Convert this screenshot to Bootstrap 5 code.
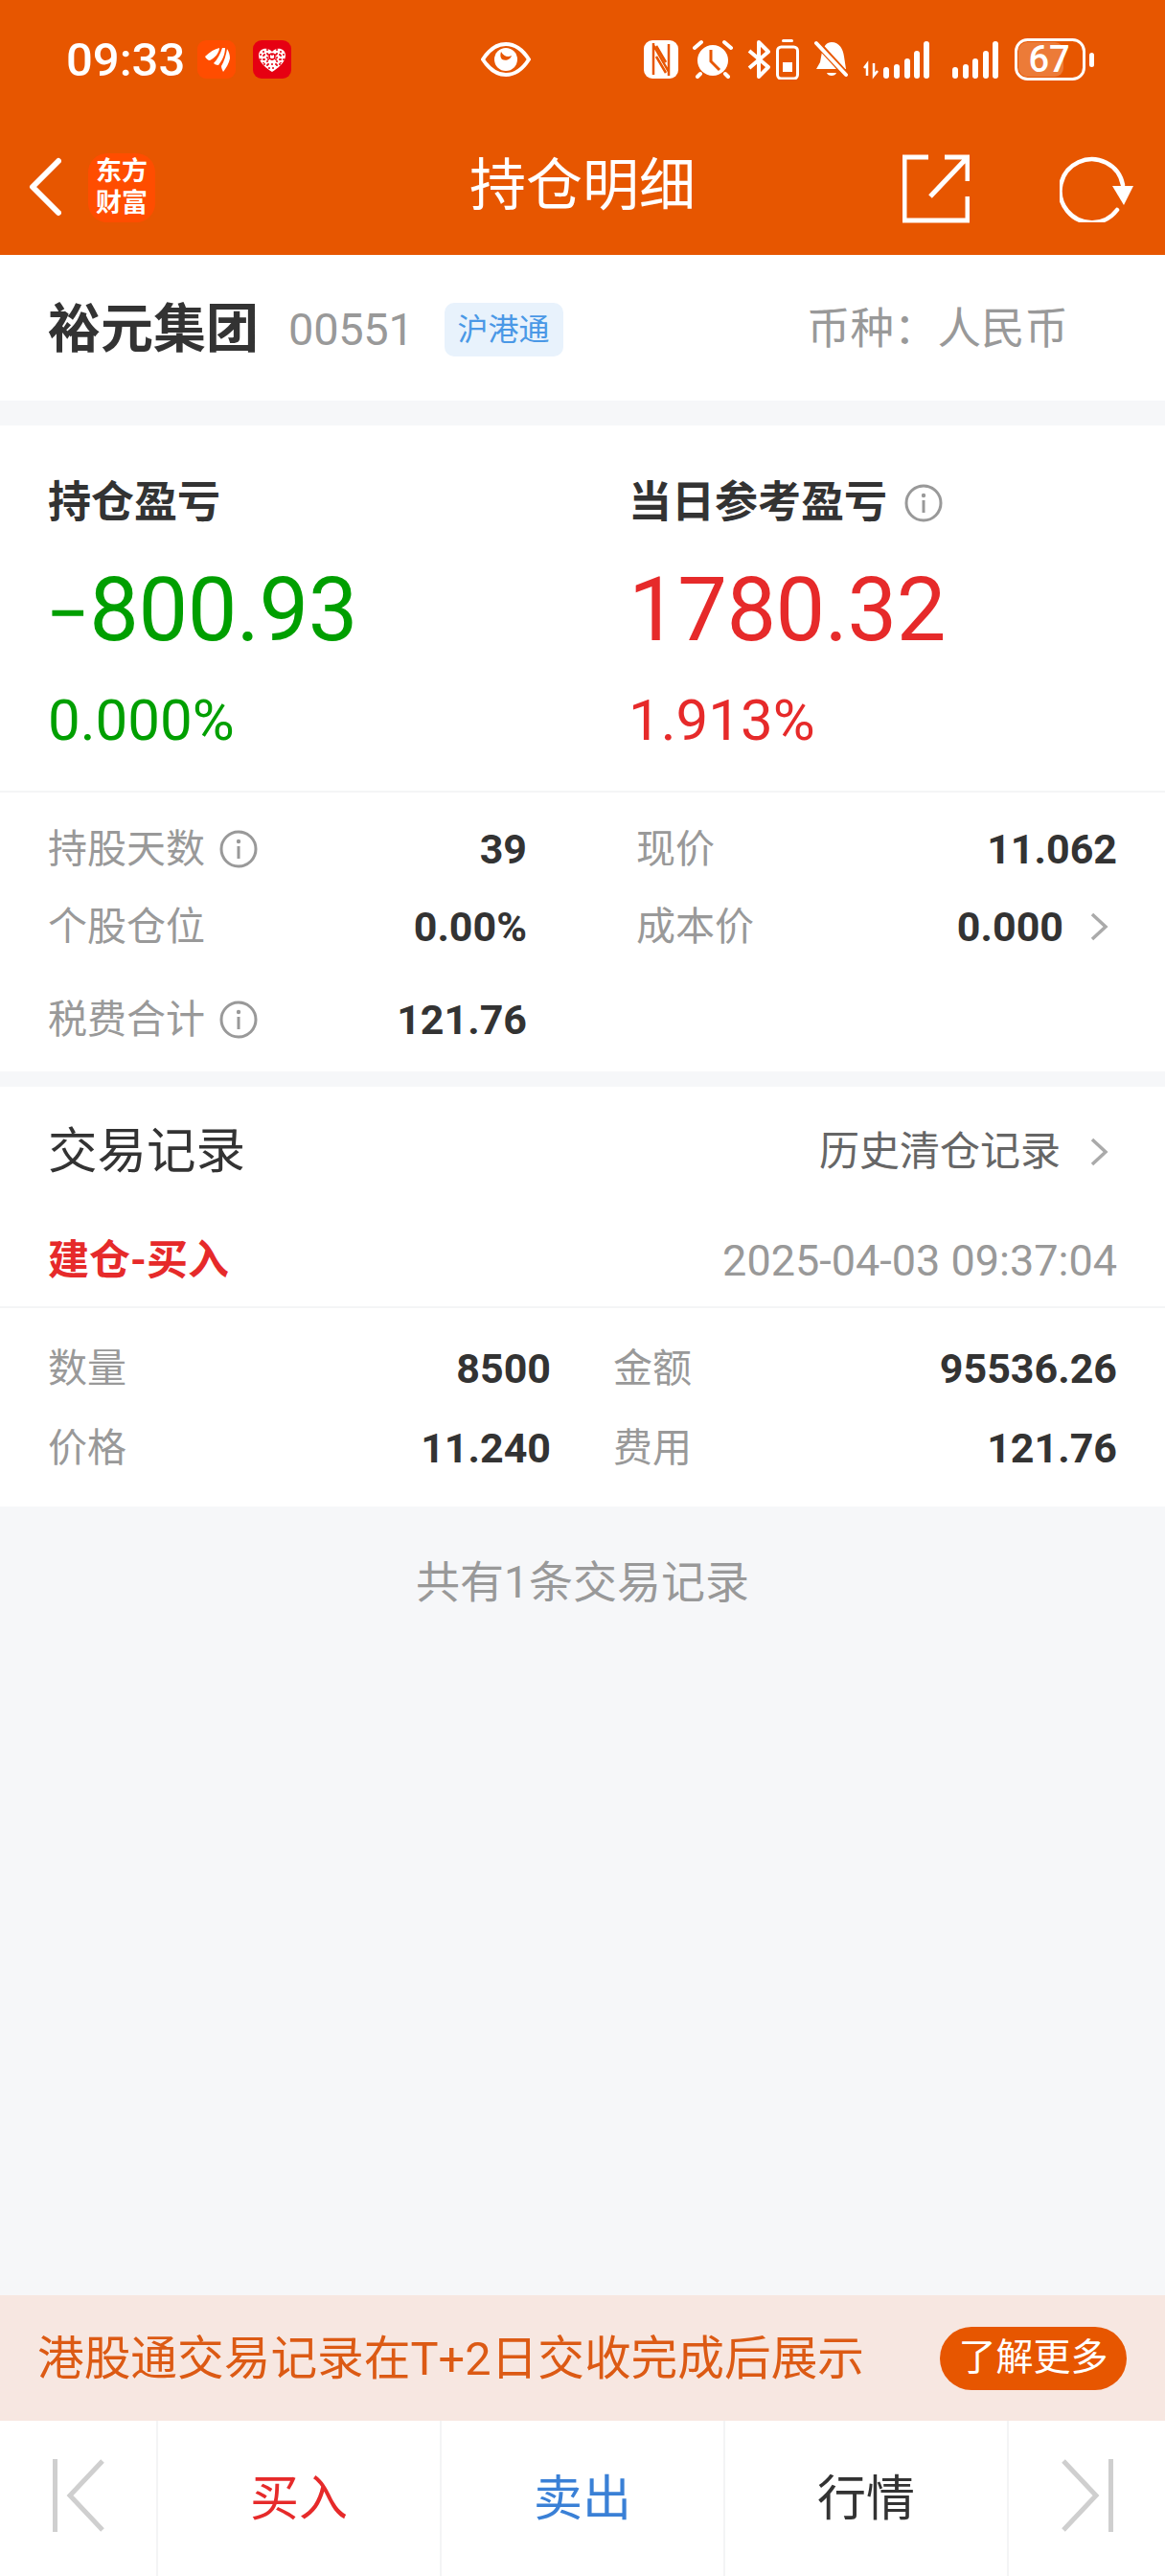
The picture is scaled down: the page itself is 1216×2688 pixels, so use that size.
<!DOCTYPE html>
<html lang="zh-CN">
<head>
  <meta charset="UTF-8">
  <meta name="viewport" content="width=device-width, initial-scale=1.0">
  <title>持仓明细</title>
  <link href="https://cdn.jsdelivr.net/npm/bootstrap@5.3.0/dist/css/bootstrap.min.css" rel="stylesheet">
  <style>
    body { background: #f6f7f9; font-family: Roboto, "Noto Sans CJK SC", sans-serif; color: #333; width: 1216px; height: 2688px; overflow: hidden; }
    .page { height: 2688px; }
    .hd { background: #e75600; height: 266px; color: #fff; }
    .status-row { height: 124px; padding-left: 69px; }
    .clock { font-size: 49px; font-weight: 500; line-height: 1; width: 137px; }
    .nav-row { height: 142px; padding-left: 30px; position: relative; }
    .ef-logo { flex: none; width: 70px; height: 72px; background-color: #ff4d00; border-radius: 20px; margin-left: 28px; margin-top: 36px; padding-top: 3px; font-size: 27px; line-height: 33px; font-weight: 700; text-align: center; }
    .nav-title { position: absolute; left: 0; right: 0; top: 32px; text-align: center; font-size: 59px; line-height: 76px; pointer-events: none; }
    .sec { background: #fff; padding-left: 50px; padding-right: 50px; }
    .stock-sec { height: 152px; padding-top: 3px; }
    .stock-name { font-size: 55px; font-weight: 700; line-height: 1; }
    .stock-code { font-size: 47px; color: #999; letter-spacing: -.3px; margin-left: 31px; line-height: 1; }
    .tag-blue { background: #e8f2fc; color: #4a98e6; font-size: 32px; line-height: 56px; height: 56px; padding: 0 14px; border-radius: 10px; margin-left: 32px; }
    .currency { font-size: 45.5px; color: #999; margin-left: auto; margin-right: 51px; line-height: 1; }
    .pnl-sec { margin-top: 26px; height: 674px; }
    .pnl-top { height: 383px; margin-left: -50px; margin-right: -50px; padding: 0 50px; border-bottom: 2px solid #f4f5f6; }
    .pnl-title { font-size: 45px; font-weight: 700; line-height: 56px; padding-top: 53px; height: 109px; }
    .pnl-num { font-size: 92px; line-height: 110px; margin-top: 29px; letter-spacing: -.5px; }
    .minus-sign { font-size: 80px; line-height: 0; margin-left: -2px; }
    .pnl-rate { font-size: 60px; line-height: 70px; margin-top: 25px; }
    .up { color: #e62a2a; }
    .down { color: #009f00; }
    .right-col { padding-left: 48px; }
    .kv { font-size: 41px; line-height: 56px; }
    .kv-label { color: #999; }
    .kv-val { font-weight: 700; font-size: 43px; color: #333; margin-left: auto; }
    .kv-left { padding-right: 58px; }
    .kv-right { padding-left: 56px; }
    .metrics { padding-top: 31px; }
    .mrow-a { margin-bottom: 25px; }
    .mrow-c { margin-top: 41px; }
    .info-ic { width: 40px; height: 40px; margin-left: 15px; flex: none; }
    .title-info { margin-left: 18px; margin-top: 8px; }
    .chev-ic { width: 20px; height: 32px; margin-left: 27px; margin-right: 9px; flex: none; }
    .trade-sec { margin-top: 16px; height: 438px; }
    .trade-title { height: 131px; padding-top: 5px; }
    .trade-title .ttl { font-size: 51.5px; line-height: 1; }
    .trade-title .hist { font-size: 42px; color: #666; line-height: 1; margin-left: auto; margin-right: 3px; }
    .trade-head { height: 100px; margin: 0 -50px; padding: 2px 50px 0; border-bottom: 2px solid #f4f5f6; }
    .trade-kind { font-size: 43px; font-weight: 700; color: #e62a2a; line-height: 1; }
    .trade-time { font-size: 45px; color: #999; margin-left: auto; line-height: 1; }
    .trade-grid { padding-top: 35px; }
    .trow { height: 83px; }
    .kv-lt { padding-right: 33px; }
    .kv-rt { padding-left: 32px; }
    .count-note { font-size: 46px; color: #999; text-align: center; line-height: 56px; padding-top: 51px; height: 823px; }
    .hk-banner { background: #f7e7e1; height: 131px; padding: 0 40px 0 39px; }
    .hk-text { font-size: 48.7px; color: #dc5a14; line-height: 1; padding-top: 3px; }
    .more-pill { background: #e75600; color: #fff; font-size: 39px; line-height: 64px; height: 66px; width: 195px; border-radius: 33px; text-align: center; margin-left: auto; }
    .tool-bar { background: #fff; height: 162px; }
    .tool-end { width: 163px; padding-top: 40px; }
    .tool-mid { width: 296px; border-left: 2px solid #f3f4f5; font-size: 51px; padding-top: 2px; }
    .tool-last { border-left: 2px solid #f3f4f5; flex: 1; padding-top: 40px; }
    .sell { color: #3a80d6; }
    .stat-gap-eye { margin-left: 198px; }
    .stat-gap-nfc { margin-left: 118px; }
    .stat-gap-15 { margin-left: 15px; }
    .stat-gap-16 { margin-left: 16px; }
    .stat-gap-18 { margin-left: 18px; }
    .stat-gap-20 { margin-left: 20px; }
    .stat-gap-5 { margin-left: 5px; }
    .back-ic { margin-top: 40px; }
    .share-ic { margin-top: 37px; margin-left: auto; }
    .refresh-ic { margin-top: 36px; margin-left: 94px; margin-right: 32px; }
  </style>
</head>
<body>
  <div class="page d-flex flex-column">
    <header class="hd">
      <div class="status-row d-flex align-items-center">
        <span class="clock">09:33</span>
        <svg width="40" height="40" viewBox="0 0 40 40"><rect width="40" height="40" rx="9" fill="#ff4d00"/><path d="M8 17C13 12 18 9 23 8C23 13 18 19 13 21C11 21 9 19 8 17Z M17 24C21 20 24 14 26 8L29 8C29 15 26 21 22 26C20 26 18 25 17 24Z M25 27C28 22 30 15 31 9C33 12 34 15 34 19C33 24 30 29 27 33C26 31 25 29 25 27Z" fill="#fff"/></svg>
        <svg class="stat-gap-18" width="40" height="40" viewBox="0 0 40 40"><rect width="40" height="40" rx="9" fill="#e60012"/><path d="M20 12C17 7 6 7 6 16C6 23 15 30 20 33C25 30 34 23 34 16C34 7 23 7 20 12Z" fill="#fff"/><g fill="none" stroke="#e60012" stroke-width="1.5"><circle cx="20" cy="17" r="3"/><path d="M11 11V24M15 9V29M25 9V29M29 11V24M7 15H33M7 20H33M11 25H29M16 29H24" stroke-dasharray="2 2"/></g></svg>
        <svg class="stat-gap-eye" width="52" height="38" viewBox="0 0 52 38"><path d="M2 19C9 8 17 3 26 3S43 8 50 19C43 30 35 35 26 35S9 30 2 19Z" fill="none" stroke="#fff" stroke-width="4"/><circle cx="26" cy="19" r="12" fill="#fff"/><path d="M21 11C24 16 28 17 32 15C31 19 26 21 22 19C20 17 20 14 21 11Z" fill="#e75600"/></svg>
        <svg class="stat-gap-nfc" width="36" height="40" viewBox="0 0 36 40"><rect width="36" height="40" rx="9" fill="#fff"/><path d="M10 3V36M26 4V37M10 5L26 33" fill="none" stroke="#e75600" stroke-width="2.5"/><path d="M13 17L23 34M13 6L23 23" stroke="#e75600" stroke-width="2.5" fill="none"/></svg>
        <svg class="stat-gap-15" width="42" height="42" viewBox="0 0 42 42"><circle cx="21" cy="22" r="16" fill="#fff"/><path d="M2 9L9 3M40 9L33 3M8 36L5 39M34 36L37 39" stroke="#fff" stroke-width="4" stroke-linecap="round"/><path d="M19 11V23L28 32" fill="none" stroke="#e75600" stroke-width="3"/></svg>
        <svg class="stat-gap-15" width="25" height="42" viewBox="0 0 25 42"><path d="M2 12L22 29L12 39V3L22 13L2 30" fill="none" stroke="#fff" stroke-width="4" stroke-linejoin="round"/></svg>
        <svg class="stat-gap-5" width="24" height="42" viewBox="0 0 24 42"><rect x="6" y="0" width="12" height="3" rx="1.5" fill="#fff"/><rect x="1.5" y="8" width="21" height="33" rx="4" fill="none" stroke="#fff" stroke-width="3"/><rect x="7" y="24" width="10" height="10" fill="#fff"/></svg>
        <svg class="stat-gap-16" width="36" height="42" viewBox="0 0 36 42"><path d="M18 3C26 3 30 10 31 18L33 31H2L6 24L8 13C10 7 13 3 18 3Z" fill="#fff"/><path d="M13 35H23C22 39 14 39 13 35Z" fill="#fff"/><path d="M1 2L34 38" stroke="#e75600" stroke-width="7"/><path d="M2 4L33 37" stroke="#fff" stroke-width="4" stroke-linecap="round"/></svg>
        <svg class="stat-gap-15" width="72" height="42" viewBox="0 0 72 42"><path d="M4 38V26L1 30" stroke="#fff" stroke-width="2.5" fill="none"/><path d="M11 25V38L15 33" stroke="#fff" stroke-width="2.5" fill="none"/><g fill="#fff"><rect x="21" y="29" width="6" height="12" rx="3"/><rect x="32" y="26" width="6" height="15" rx="3"/><rect x="43" y="20" width="6" height="21" rx="3"/><rect x="53" y="12" width="6" height="29" rx="3"/><rect x="63" y="2" width="6" height="39" rx="3"/></g></svg>
        <svg class="stat-gap-20" width="50" height="42" viewBox="0 0 50 42"><g fill="#fff"><rect x="1" y="29" width="6" height="12" rx="3"/><rect x="12" y="26" width="6" height="15" rx="3"/><rect x="22" y="20" width="6" height="21" rx="3"/><rect x="33" y="12" width="6" height="29" rx="3"/><rect x="43" y="2" width="6" height="39" rx="3"/></g></svg>
        <svg class="stat-gap-16" width="84" height="44" viewBox="0 0 84 44"><rect x="4" y="4" width="47" height="36" rx="9" fill="#fff" opacity=".22"/><rect x="1.5" y="1.5" width="71" height="41" rx="12" fill="none" stroke="#fff" stroke-width="3"/><rect x="78" y="15" width="5" height="15" rx="2.5" fill="#fff"/><text x="36" y="35" text-anchor="middle" fill="#fff" font-size="38" font-weight="500" font-family="Roboto, sans-serif">67</text></svg>
      </div>
      <div class="nav-row d-flex align-items-start">
        <svg class="back-ic" width="34" height="62" viewBox="0 0 34 62"><path d="M31 4L4 31L31 58" fill="none" stroke="#fff" stroke-width="6" stroke-linecap="round" stroke-linejoin="round"/></svg>
        <div class="ef-logo">东方<br>财富</div>
        <div class="nav-title">持仓明细</div>
        <svg class="share-ic" width="70" height="72" viewBox="0 0 70 72"><path d="M27 3H2V69H68V44M44 3H68V28M68 3L29 44" fill="none" stroke="#fff" stroke-width="5"/></svg>
        <svg class="refresh-ic" width="78" height="72" viewBox="0 0 78 72"><path d="M60 59A33 33 0 1 1 66 33" fill="none" stroke="#fff" stroke-width="4.5" stroke-linecap="round"/><path d="M55 34H77L67 54Z" fill="#fff"/></svg>
      </div>
    </header>

    <section class="sec stock-sec d-flex align-items-center">
      <span class="stock-name">裕元集团</span>
      <span class="stock-code">00551</span>
      <span class="tag-blue">沪港通</span>
      <span class="currency">币种：人民币</span>
    </section>

    <section class="sec pnl-sec">
      <div class="pnl-top row g-0">
        <div class="col-6">
          <div class="pnl-title">持仓盈亏</div>
          <div class="pnl-num down"><span class="minus-sign">−</span>800.93</div>
          <div class="pnl-rate down">0.000%</div>
        </div>
        <div class="col-6 right-col">
          <div class="pnl-title d-flex align-items-start">当日参考盈亏<svg class="info-ic title-info"><use href="#ic-info"/></svg></div>
          <div class="pnl-num up">1780.32</div>
          <div class="pnl-rate up">1.913%</div>
        </div>
      </div>
      <div class="metrics">
        <div class="row g-0 mrow-a">
          <div class="col-6 kv kv-left d-flex align-items-center"><span class="kv-label">持股天数</span><svg class="info-ic"><use href="#ic-info"/></svg><span class="kv-val">39</span></div>
          <div class="col-6 kv kv-right d-flex align-items-center"><span class="kv-label">现价</span><span class="kv-val">11.062</span></div>
        </div>
        <div class="row g-0">
          <div class="col-6 kv kv-left d-flex align-items-center"><span class="kv-label">个股仓位</span><span class="kv-val">0.00%</span></div>
          <div class="col-6 kv kv-right d-flex align-items-center"><span class="kv-label">成本价</span><span class="kv-val">0.000</span><svg class="chev-ic"><use href="#ic-chev"/></svg></div>
        </div>
        <div class="row g-0 mrow-c">
          <div class="col-6 kv kv-left d-flex align-items-center"><span class="kv-label">税费合计</span><svg class="info-ic"><use href="#ic-info"/></svg><span class="kv-val">121.76</span></div>
        </div>
      </div>
    </section>

    <section class="sec trade-sec">
      <div class="trade-title d-flex align-items-center">
        <span class="ttl">交易记录</span>
        <span class="hist">历史清仓记录</span>
        <svg class="chev-ic"><use href="#ic-chev"/></svg>
      </div>
      <div class="trade-head d-flex align-items-center">
        <span class="trade-kind">建仓-买入</span>
        <span class="trade-time">2025-04-03 09:37:04</span>
      </div>
      <div class="trade-grid">
        <div class="row g-0 trow">
          <div class="col-6 kv kv-lt d-flex"><span class="kv-label">数量</span><span class="kv-val">8500</span></div>
          <div class="col-6 kv kv-rt d-flex"><span class="kv-label">金额</span><span class="kv-val">95536.26</span></div>
        </div>
        <div class="row g-0 trow">
          <div class="col-6 kv kv-lt d-flex"><span class="kv-label">价格</span><span class="kv-val">11.240</span></div>
          <div class="col-6 kv kv-rt d-flex"><span class="kv-label">费用</span><span class="kv-val">121.76</span></div>
        </div>
      </div>
    </section>

    <div class="count-note">共有1条交易记录</div>

    <div class="hk-banner d-flex align-items-center">
      <span class="hk-text">港股通交易记录在T+2日交收完成后展示</span>
      <span class="more-pill">了解更多</span>
    </div>

    <nav class="tool-bar d-flex">
      <div class="tool-end d-flex justify-content-center">
        <svg width="54" height="76" viewBox="0 0 54 76"><path d="M2.5 0V76" stroke="#cfcfcf" stroke-width="5"/><path d="M52 2L18 38L52 74" fill="none" stroke="#cfcfcf" stroke-width="5"/></svg>
      </div>
      <div class="tool-mid up d-flex align-items-center justify-content-center">买入</div>
      <div class="tool-mid sell d-flex align-items-center justify-content-center">卖出</div>
      <div class="tool-mid d-flex align-items-center justify-content-center">行情</div>
      <div class="tool-last d-flex justify-content-center">
        <svg width="54" height="76" viewBox="0 0 54 76"><path d="M51.5 0V76" stroke="#cfcfcf" stroke-width="5"/><path d="M2 2L36 38L2 74" fill="none" stroke="#cfcfcf" stroke-width="5"/></svg>
      </div>
    </nav>
  </div>

  <svg width="0" height="0" class="position-absolute">
    <symbol id="ic-info" viewBox="0 0 40 40"><circle cx="20" cy="20" r="18" fill="none" stroke="#999" stroke-width="3"/><circle cx="20" cy="12" r="2.2" fill="#999"/><path d="M20 17V30" stroke="#999" stroke-width="3"/></symbol>
    <symbol id="ic-chev" viewBox="0 0 20 32"><path d="M3 3L17 16L3 29" fill="none" stroke="#aaa" stroke-width="3.5"/></symbol>
  </svg>
  <script src="https://cdn.jsdelivr.net/npm/bootstrap@5.3.0/dist/js/bootstrap.bundle.min.js"></script>
</body>
</html>
